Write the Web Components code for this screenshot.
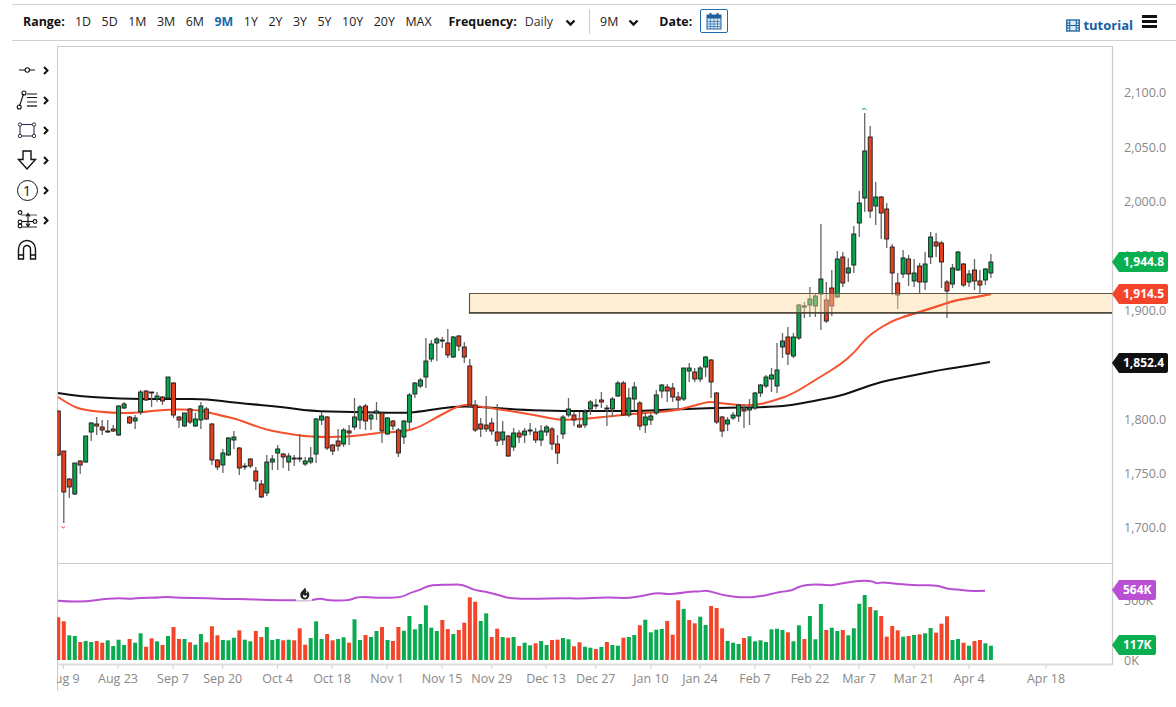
<!DOCTYPE html>
<html>
<head>
<meta charset="utf-8">
<title>Chart</title>
<style>
  html, body { margin: 0; height: 100%; background: #fff; overflow: hidden; }
  body { font-family: "Open Sans", "Noto Sans", sans-serif; }
  .page { display: flex; flex-direction: column; height: 707px; }
  .main { display: flex; flex: 1; margin-top: 5px; }
</style>
</head>
<body>
<div class="page">
  <chart-toolbar></chart-toolbar>
  <div class="main">
    <drawing-tools></drawing-tools>
    <stock-chart></stock-chart>
  </div>
</div>

<script>
class ChartToolbar extends HTMLElement {
  constructor() {
    super();
    this.attachShadow({ mode: "open" });
  }

  connectedCallback() {
    const ranges = ["1D", "5D", "1M", "3M", "6M", "9M", "1Y", "2Y", "3Y", "5Y", "10Y", "20Y", "MAX"];
    const chevron = `<svg class="chev" width="11" height="8" viewBox="0 0 11 8"><path d="M1.5 1.5 5.5 5.5 9.5 1.5" fill="none" stroke="#111" stroke-width="2.4"/></svg>`;
    this.shadowRoot.innerHTML = `
      <style>
        :host {
          display: flex;
          align-items: flex-start;
          height: 35px;
          margin: 4px 0 0 12px;
          border-top: 1.5px solid #cfcfcf;
          border-bottom: 1.5px solid #cfcfcf;
          font: 12.4px "Open Sans", "Noto Sans", sans-serif;
          color: #222;
        }
        b { font-weight: 700; color: #111; }
        .group { display: flex; align-items: center; height: 32px; }
        .ranges { gap: 10.55px; margin-left: 11px; }
        .ranges b { margin-right: -.3px; }
        .ranges span.on { color: #1769aa; font-weight: 700; }
        .freq { margin-left: 17px; }
        .freq .val { margin-left: 8px; color: #333; }
        .chev { margin-left: 12px; margin-top: 3px; }
        .chev.near { margin-left: 10px; }
        .sep { width: 1px; height: 25px; background: #ccc; margin: 0 10px 0 13px; }
        .date { margin-left: 20px; }
        .cal {
          display: flex; align-items: center; justify-content: center;
          width: 26px; height: 22px; margin-left: 7.5px;
          border: 1px solid #1f6db0; border-radius: 2px;
        }
        .right { margin-left: auto; margin-right: 19px; }
        .tut { display: flex; align-items: center; gap: 3px; color: #14609f; font-weight: 700; font-size: 13px; margin-top: 8px; }
        .burger { width: 15px; height: 13px; margin: 0 0 0 9px; display: flex; flex-direction: column; justify-content: space-between; }
        .burger i { display: block; height: 3px; background: #111; }
      </style>
      <div class="group ranges">
        <b>Range:</b>
        ${ranges.map(r => `<span class="${r === "9M" ? "on" : ""}">${r}</span>`).join("")}
      </div>
      <div class="group freq"><b>Frequency:</b><span class="val">Daily</span>${chevron}<div class="sep"></div><span>9M</span>${chevron.replace('class="chev"', 'class="chev near"')}</div>
      <div class="group date">
        <b>Date:</b>
        <div class="cal">
          <svg width="16" height="18" viewBox="0 0 16 18">
            <rect x="1" y="3" width="14" height="14" fill="#dbe7f3" stroke="#1f5f9e"/>
            <rect x="1" y="3" width="14" height="3.5" fill="#1f5f9e"/>
            <path d="M1 9.5H15M1 12H15M1 14.5H15M4.5 6V17M8 6V17M11.500 6V17" stroke="#3b78b3" stroke-width=".8" fill="none"/>
            <path d="M4.500 1V4.500M11.500 1V4.500" stroke="#1f5f9e" stroke-width="2" fill="none"/>
          </svg>
        </div>
      </div>
      <div class="group right">
        <div class="tut">
          <svg width="14" height="13" viewBox="0 0 14 13">
            <rect x=".75" y="1" width="12.500" height="11" fill="#dfeaf5" stroke="#14609f" stroke-width="1.300"/>
            <path d="M3.800 1V12M10.200 1V12M1 6.500H13M1 4H3.800M1 9H3.800M10.200 4H13M10.200 9H13" stroke="#14609f" fill="none"/>
          </svg>
          <span>tutorial</span>
        </div>
        <div class="burger"><i></i><i></i><i></i></div>
      </div>
    `;
  }
}

class DrawingTools extends HTMLElement {
  constructor() {
    super();
    this.attachShadow({ mode: "open" });
  }

  connectedCallback() {
    const s = `fill="none" stroke="#111" stroke-width="1.100"`;
    // each icon sits in a 22x22 box centred on x=27
    const icons = [
      `<path d="M3 11H9M13.500 11H19" ${s}/><circle cx="11.300" cy="11" r="2.200" ${s}/>`,
      `<path d="M3.500 17 7.500 5" ${s}/><circle cx="3.200" cy="18" r="2" ${s}/><circle cx="8" cy="4" r="2" ${s}/><path d="M11 5H21M11 8.500H21" ${s}/><path d="M11 13H21" stroke="#555" stroke-width="1.300"/><path d="M11 17H21" stroke="#555" stroke-width="1.800"/>`,
      `<rect x="4" y="5.500" width="14" height="11.500" fill="none" stroke="#3a2a55" stroke-width="1.100"/><circle cx="4" cy="5.500" r="1.700" fill="#fff" stroke="#333"/><circle cx="18" cy="5.500" r="1.700" fill="#fff" stroke="#333"/><circle cx="4" cy="17" r="1.700" fill="#fff" stroke="#333"/><circle cx="18" cy="17" r="1.700" fill="#fff" stroke="#333"/>`,
      `<path d="M7 2H15V10.500H19.500L11 20 2.500 10.500H7Z" fill="none" stroke="#111" stroke-width="1.400"/>`,
      null,
      `<circle cx="4" cy="3.500" r="1.900" ${s}/><circle cx="4" cy="13" r="1.900" ${s}/><circle cx="4" cy="17" r="1.900" ${s}/><circle cx="19" cy="12.500" r="1.900" ${s}/><path d="M5 6H21" stroke="#555"/><path d="M6 12.500H17" ${s}/><path d="M6 18H21" stroke="#555" stroke-width="1.300"/><path d="M12 5V17M10 7.500 12 4.500 14 7.500M10 14.500 12 17.500 14 14.500" ${s}/>`,
      `<path d="M2.500 20V10A8.500 8.500 0 0 1 19.500 10V20H14.500V10A3.500 3.500 0 0 0 7.500 10V20ZM2.500 16H7.500M14.500 16H19.500" fill="none" stroke="#111" stroke-width="1.400"/>`
    ];
    const rows = icons.map((icon, i) => {
      const glyph = icon === null
        ? `<span class="num">1</span>`
        : `<svg width="22" height="22" viewBox="0 0 22 22">${icon}</svg>`;
      const arrow = i < 6
        ? `<svg class="arr" width="6" height="9" viewBox="0 0 6 9"><path d="M1 1 4.500 4.500 1 8" fill="none" stroke="#111" stroke-width="2"/></svg>`
        : "";
      return `<div class="row"><div class="ico">${glyph}</div>${arrow}</div>`;
    }).join("");
    this.shadowRoot.innerHTML = `
      <style>
        :host { display: block; width: 57px; padding-top: 9px; box-sizing: border-box; }
        .row { display: flex; align-items: center; height: 30px; padding-left: 16px; }
        .ico { width: 22px; height: 22px; display: flex; align-items: center; justify-content: center; }
        .arr { margin-left: 5px; }
        .num {
          flex: none; box-sizing: border-box; width: 21px; height: 21px; border: 1.400px solid #111; border-radius: 50%;
          display: flex; align-items: center; justify-content: center;
          font: 14px "Open Sans", sans-serif; color: #111;
        }
      </style>
      ${rows}
    `;
  }
}

class PriceTag extends HTMLElement {
  constructor() {
    super();
    this.attachShadow({ mode: "open" });
  }

  connectedCallback() {
    this.style.top = (this.getAttribute("y") - 46 - 10) + "px";
    this.style.width = (this.getAttribute("w") || 56) + "px";
    this.style.background = this.getAttribute("color");
    this.shadowRoot.innerHTML = `
      <style>
        :host {
          position: absolute;
          left: 1055px;
          height: 20px;
          padding-left: 11px;
          box-sizing: border-box;
          line-height: 20px;
          font: 700 12px/20px "Open Sans", "Noto Sans", sans-serif;
          color: #fff;
          clip-path: polygon(0 50%, 7px 0, 100% 0, 100% 100%, 7px 100%);
          border-radius: 0 2px 2px 0;
        }
      </style>
      <slot></slot>
    `;
  }
}

// candle data: top, bottom, high, low (pixels on the chart), g/r
const CANDLES = `411,455,411,456,r 451,492,451,523,r 479,487,478,498,r 463,494,463,495,g 461,465,460,474,r
436,462,436,463,g 423,432,422,441,g 424,426,417,435,r 427,430,420,435,r 431,432,420,433,r
429,431,425,432,r 406,435,405,436,g 404,408,402,409,g 417,423,416,424,r 418,421,415,429,g
392,412,390,415,g 391,400,390,401,r 392,393,392,407,r 396,399,392,402,g 397,401,396,405,r
377,398,377,399,g 383,415,382,418,r 417,420,416,428,r 413,426,413,427,g 409,422,408,424,r
419,426,413,427,g 406,420,402,429,g 409,419,407,420,r 424,460,423,465,r 460,467,459,470,r
453,465,449,473,g 438,455,437,456,g 437,440,431,449,g 448,468,447,475,r 466,467,463,470,g
459,466,458,468,r 471,481,467,490,r 484,497,480,498,r 462,493,455,496,g 459,462,455,470,g
449,453,445,470,g 454,457,453,468,r 456,462,453,471,g 458,459,455,466,r 458,459,434,462,r
461,464,457,466,g 458,462,447,464,g 419,454,418,463,g 416,420,412,425,g 417,448,416,450,r
445,451,444,455,r 441,446,429,451,r 430,444,428,447,g 431,433,425,445,r 417,427,398,430,g
407,420,405,429,g 406,421,404,430,r 415,419,412,430,g 411,413,402,420,g 413,431,412,443,r
418,434,417,435,g 421,426,420,430,r 430,453,428,457,r 421,437,420,444,g 395,422,393,429,g
383,394,382,398,g 380,386,378,388,g 361,377,338,388,g 344,359,340,362,g 339,343,337,361,g
340,341,337,348,g 343,355,329,358,r 337,357,336,358,g 336,346,335,351,r 347,357,342,363,r
366,405,359,407,r 405,430,400,432,r 424,429,418,437,r 425,429,396,432,r 423,431,418,435,r
432,441,404,446,r 432,440,421,445,g 436,456,435,457,r 433,447,428,451,g 433,437,430,443,r
431,435,428,443,g 430,431,423,435,g 432,440,428,443,r 431,440,425,446,g 427,432,425,436,g
429,444,427,450,r 444,453,435,464,r 417,434,415,439,g 409,415,398,417,g 415,420,412,426,r
425,427,412,428,r 412,425,409,428,g 402,409,400,415,g 405,406,399,409,g 400,402,392,408,r
408,409,405,426,g 399,409,397,417,g 383,396,381,397,g 383,415,381,416,r 398,415,388,417,g
387,399,382,410,g 403,426,401,430,r 417,425,413,433,g 416,420,413,425,g 395,413,390,415,g
385,391,384,398,g 387,391,384,402,r 388,397,383,402,r 397,400,392,408,r 368,399,368,401,g
368,371,363,382,g 372,379,368,382,r 368,379,366,382,g 357,367,356,377,g 360,382,359,398,r
393,422,392,424,r 417,431,416,437,r 420,424,417,431,g 415,418,412,420,g 405,416,404,422,g
409,411,404,428,r 408,410,399,425,g 393,408,392,410,g 385,393,384,397,g 377,386,375,388,g
375,379,368,392,g 370,386,343,393,g 341,347,333,358,g 337,354,327,365,r 337,356,333,358,g
305,338,304,340,g 306,307,302,318,r 299,305,287,317,g 296,306,293,317,g 279,294,224,330,g
300,321,282,323,r 288,306,270,316,r 259,297,251,298,g 257,283,252,287,r 268,273,258,282,g
234,265,226,273,g 203,223,191,237,g 151,198,113,212,g 137,211,126,218,r 197,206,182,225,g
197,213,196,239,r 209,239,203,248,r 247,273,244,295,r 283,295,273,309,r 258,274,250,278,g
259,274,255,286,r 273,281,259,287,g 266,282,263,293,r 264,282,252,290,g 237,257,232,264,g
242,246,233,257,r 243,262,241,288,r 282,291,280,318,r 268,284,264,288,g 252,270,251,271,g
264,285,263,287,r 274,282,270,287,g 270,281,259,290,r 281,285,270,293,r 269,280,268,285,g
262,273,254,278,g`.trim().split(/\s+/).map(c => {
  const p = c.split(",");
  return { t: +p[0], b: +p[1], h: +p[2], l: +p[3], c: p[4] };
});

// volume bar tops and colours
const VOLUMES = `617.300,r 621.300,r 635.300,g 636,g 642,r 641,g 642,g 641,r 642.700,r 640.300,g 646,g 639.700,g 645,g 639,r 642.700,g
633.300,g 646.700,r 638.300,r 641.300,g 645,r 636,g 627,r 639,r 639,g 642.300,r 644.700,g 634,g 642.300,r 626.300,r 635.300,r
640,g 640.300,g 637.700,g 630.300,r 639.700,g 641.300,g 631,r 637,r 627,g 640,g 639,g 640.300,r 639.700,g 640.300,r 628.300,r
644.700,r 638,g 621.300,g 639,g 634,r 640.300,r 639,g 637.300,g 642.700,r 619.300,g 640,g 635,r 637,g 631,g 627,r
640,g 641,r 627,r 630.700,g 616,g 629.300,g 624,g 605.300,g 627.700,g 631,g 620,r 629,r 634,g 630,r 622.700,r
597.300,r 601.700,r 621,g 613.300,g 637,r 628.700,r 637,g 637.700,r 637,g 646,r 642.700,g 645.300,g 643.300,r 641,g 645,g
640,r 639.700,r 638,g 639.300,g 646.300,r 642.300,r 646.700,g 647.700,g 649,r 647,g 642,r 645,g 645.700,g 637.700,r 637,g
635,g 625.300,r 619.700,g 632.300,g 629.700,g 629,g 621,r 634.700,r 600.300,r 609,g 620,r 623.300,r 616.700,g 625,g 606,r
608,r 628.300,r 641,g 642.700,g 644,g 638,r 636.300,g 641.300,g 640.300,g 642,g 629.300,g 628.700,g 630,g 632.300,r 641.300,g
625.300,g 639,r 616,g 639.300,g 604,g 630,r 627.700,g 631,g 630,r 635.300,g 628.300,g 603.700,g 595,g 607,r 610.300,g
616,r 636.700,r 626,r 630.300,r 636.700,g 636,r 635,g 634.300,r 633.300,g 628,g 632.700,r 623.700,r 616.300,r 640,g 639,g
642.700,r 645.700,g 641,r 640,r 643.300,g 645.700,g`.trim().split(/\s+/).map(v => {
  const p = v.split(",");
  return { y: +p[0], c: p[1] };
});

// moving averages, traced in page pixels
const LINE_BLACK = "58,393 70,395 90,397 130,399 177,399 207,399 237,403 283,407 310,411 350,412 403,413 417,412 443,408 463,406 497,408 523,410 563,411 603,411 640,411 707,408 773,407 793,405 813,401 840,396 860,389 880,382 900,378 920,374 940,370 960,367 990,362";
const LINE_RED = "58,397 70,405 83,410 113,413 137,413 167,409 197,410 207,412 223,416 237,419 263,429 283,433 310,437 350,437 383,432 403,432 420,427 437,417 460,405 470,405 497,409 523,413 550,418 560,420 583,419 603,417 643,413 673,411 693,406 707,402 713,402 727,404 753,406 773,401 793,394 820,377 840,365 855,352 866,338 877,330 890,322 903,317 923,311 947,303 957,300 977,297 991,294";
const LINE_RED_TAIL = "903,317 923,311 947,303 957,300 977,297 991,294";
const LINE_PURPLE = "58,600.700 70,601.700 87,601.300 100,599.700 117,598 133,599 140,597.700 157,597.700 167,596.700 177,598 210,598 227,599.300 243,598.700 267,600.300 297,600.300 312,600.300 320,598.300 330,600.700 350,600.300 358,596.300 380,598 402,597.300 410,592.700 420,590 428,585.700 437,584.700 450,584.700 463,584.300 473,590 485,591.700 500,595.300 508,598.300 533,599 563,598 577,598.700 607,597.300 628,598.300 643,595.700 657,592.700 667,594.300 680,593.300 692,591.300 700,591.700 707,590 722,595.300 743,597.700 760,596.700 780,591.700 792,590.700 800,586 815,584 830,585.700 837,584.300 858,580.700 872,581 877,583.700 882,582 897,584 920,585.300 937,585 947,589 957,589.300 970,591.300 985,590.700";

const PRICE_LABELS = [["2,100.0", 92], ["2,050.0", 147], ["2,000.0", 201], ["1,950.0", 255], ["1,900.0", 310], ["1,850.0", 364], ["1,800.0", 419], ["1,750.0", 473], ["1,700.0", 527], ["500K", 600], ["0K", 660]];
const DATE_TICKS = [["Aug 9", 63.300], ["Aug 23", 118], ["Sep 7", 173], ["Sep 20", 222.700], ["Oct 4", 277.500], ["Oct 18", 332], ["Nov 1", 387], ["Nov 15", 442], ["Nov 29", 491.700], ["Dec 13", 546], ["Dec 27", 595.700], ["Jan 10", 651], ["Jan 24", 700], ["Feb 7", 755], ["Feb 22", 810], ["Mar 7", 859], ["Mar 21", 914], ["Apr 4", 969], ["Apr 18", 1046]];

const barX = i => 58.300 + 5.486 * i;

// rounds the traced corners off by curving through the segment midpoints
function smoothPath(points) {
  const p = points.split(" ").map(s => s.split(",").map(Number));
  let d = `M${p[0][0]} ${p[0][1]}`;
  for (let i = 1; i < p.length - 1; i++) {
    const mx = (p[i][0] + p[i + 1][0]) / 2, my = (p[i][1] + p[i + 1][1]) / 2;
    d += `Q${p[i][0]} ${p[i][1]} ${mx} ${my}`;
  }
  const last = p[p.length - 1];
  return d + `L${last[0]} ${last[1]}`;
}

class StockChart extends HTMLElement {
  constructor() {
    super();
    this.attachShadow({ mode: "open" });
  }

  connectedCallback() {
    const GREEN = "#09a24e", RED = "#e2401f";
    const candles = CANDLES.map((c, i) => {
      const x = barX(i).toFixed(1);
      const h = Math.max(c.b - c.t, 0.8);
      return `<line x1="${x}" x2="${x}" y1="${c.h}" y2="${c.l}" stroke="#666" stroke-width="1.300"/>` +
        `<rect x="${(x - 2).toFixed(1)}" y="${c.t}" width="4" height="${h}" fill="${c.c === "g" ? GREEN : RED}" stroke="#1b1b1b" stroke-width=".9"/>`;
    }).join("");
    const vols = VOLUMES.map((v, i) =>
      `<rect x="${(barX(i) - 2).toFixed(1)}" y="${v.y}" width="4" height="${660 - v.y}" fill="${v.c === "g" ? "#0aab50" : "#f4452a"}"/>`
    ).join("");
    const prices = PRICE_LABELS.map(([t, y]) => `<text x="1124" y="${y}" class="lbl" dominant-baseline="central">${t}</text>`).join("");
    const dates = DATE_TICKS.map(([t, x]) =>
      `<line x1="${x}" x2="${x}" y1="665" y2="669" stroke="#ccc"/><text x="${x}" y="678" class="lbl" text-anchor="middle" dominant-baseline="central">${t}</text>`
    ).join("");

    this.shadowRoot.innerHTML = `
      <style>
        :host { display: block; position: relative; width: 1119px; height: 661px; }
        svg { display: block; }
        .lbl { font: 12.500px "Open Sans", "Noto Sans", sans-serif; fill: #888; }
        .soft { filter: blur(.3px); }
      </style>
      <svg width="1119" height="661" viewBox="57 46 1119 661">
        <g stroke="#ccc" fill="none">
          <path d="M57 46.500H1112.500M1112.500 46V665M57.500 46V691" stroke-width="1.200"/>
          <path d="M57 563.500H1112"/>
          <path d="M57 664.500H1112" stroke="#ddd" stroke-width="2"/>
        </g>
        ${prices}
        ${dates}
        <path d="${smoothPath(LINE_BLACK)}" fill="none" stroke="#111" stroke-width="2.200"/>
        <path d="${smoothPath(LINE_RED)}" fill="none" stroke="#f4512c" stroke-width="2"/>
        <g class="soft">${candles}</g>
        <path d="M61.500 526.500 63.300 528 65 526.500" fill="none" stroke="#e2401f"/>
        <path d="M862 109.500Q864 107.500 866.500 109.500" fill="none" stroke="#09a24e"/>
        <rect x="469.500" y="293.500" width="642.500" height="19.500" fill="#fad9a0" fill-opacity=".45"/>
        <path d="${smoothPath(LINE_RED_TAIL)}" fill="none" stroke="#f4512c" stroke-width="2"/>
        <path d="M1112 293.500H469.500V312.800H1112" fill="none" stroke="#5f5a4c" stroke-width="1.200"/>
        <path d="M469 312.800H1112" stroke="#3f3a2c" fill="none" stroke-width="1.200"/>
        <g class="soft">${vols}</g>
        <path d="${smoothPath(LINE_PURPLE)}" fill="none" stroke="#b950d3" stroke-width="2"/>
        <rect x="296" y="586" width="16" height="14" fill="#fff"/>
        <path d="M296 600.500H312" stroke="#c9c9c9"/>
        <path d="M305 587.500C304 590 300.300 591.300 300.300 595 300.300 597.800 302.500 599.500 304.800 599.500 307.500 599.500 309.300 597.500 309.300 595 309.300 593 308.300 591.800 307.500 590.800 307.500 592.500 306.800 593.300 306 593.500 306.500 591.500 306.500 589.500 305 587.500ZM303.300 594.500C302.500 596 303.300 597.800 305 597.800 306.700 597.800 307.500 596 306.500 594.800 306 596 304.500 596 303.300 594.500Z" fill="#222" fill-rule="evenodd"/>
      </svg>
      <price-tag y="262" color="#0aaf50">1,944.8</price-tag>
      <price-tag y="294" color="#f4452a">1,914.5</price-tag>
      <price-tag y="363" color="#111111">1,852.4</price-tag>
      <price-tag y="590" w="44" color="#b950d3">564K</price-tag>
      <price-tag y="645" w="44" color="#0aaf50">117K</price-tag>
    `;
  }
}

customElements.define("chart-toolbar", ChartToolbar);
customElements.define("drawing-tools", DrawingTools);
customElements.define("price-tag", PriceTag);
customElements.define("stock-chart", StockChart);
</script>
</body>
</html>
